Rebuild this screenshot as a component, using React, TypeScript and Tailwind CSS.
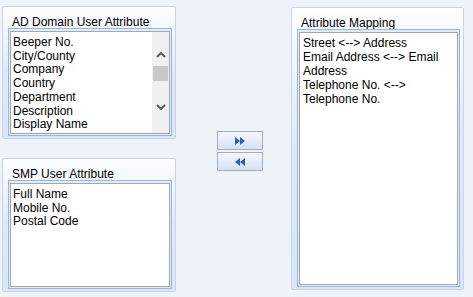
import React from 'react';

const adAttrs = ['Beeper No.', 'City/County', 'Company', 'Country', 'Department', 'Description', 'Display Name'];
const smpAttrs = ['Full Name', 'Mobile No.', 'Postal Code'];
const mappings = ['Street <--> Address', 'Email Address <--> Email Address', 'Telephone No. <--> Telephone No.'];

function Panel({ title, height, children }: { title: string; height: string; children: React.ReactNode }) {
  return (
    <div className={`flex flex-col border border-[#c4d5ec] rounded-[2px] bg-gradient-to-b from-[#fdfeff] via-[#dfe9f7] to-[#dae6f6] pl-[5px] pr-[3px] pb-[2px] ${height}`}>
      <div className="h-[21px] pt-[8px] pl-[4px] leading-[14px] text-[12px] text-black shrink-0">{title}</div>
      <div className="flex-1 flex flex-col border border-[#98b5df] bg-[#e3ecf9] p-[1px] pt-[2px] min-h-0">
        <div className="flex-1 flex border border-[#a6a6a6] bg-white min-h-0 overflow-hidden">{children}</div>
      </div>
    </div>
  );
}

function Chevron({ up }: { up?: boolean }) {
  return (
    <svg width="10" height="7" viewBox="0 0 10 7">
      <path d={up ? 'M1 6 L5 2 L9 6' : 'M1 1 L5 5 L9 1'} fill="none" stroke="#5f5f5f" strokeWidth="2" />
    </svg>
  );
}

function ArrowButton({ dir }: { dir: 'right' | 'left' }) {
  return (
    <button className="w-[46px] h-[19px] flex items-center justify-center border border-[#acacac] bg-gradient-to-b from-[#f4f8fe] to-[#d3e2f5]">
      <svg width="10" height="8" viewBox="0 0 10 8">
        {dir === 'right' ? (
          <path d="M0 0 L5 4 L0 8 Z M5 0 L10 4 L5 8 Z" fill="#2c62ad" />
        ) : (
          <path d="M10 0 L5 4 L10 8 Z M5 0 L0 4 L5 8 Z" fill="#2c62ad" />
        )}
      </svg>
    </button>
  );
}

export default function App() {
  return (
    <div
      className="w-[473px] h-[297px] bg-[#eef3fa] flex items-start pl-[2px] pt-[6px] text-black"
      style={{ fontFamily: '"Liberation Sans", Arial, sans-serif' }}
    >
      <div className="w-[174px] flex flex-col gap-[19px]">
        <Panel title="AD Domain User Attribute" height="h-[133px]">
          <div className="flex-1 pl-[2px] pt-[4px] text-[12px] leading-[13.7px]">
            {adAttrs.map((a) => (
              <div key={a}>{a}</div>
            ))}
          </div>
          <div className="w-[17px] bg-[#f0f0f0] flex flex-col items-center pt-[19px]">
            <Chevron up />
            <div className="mt-[8px] w-[15px] h-[15px] bg-[#c8c8c8]" />
            <div className="mt-[23px]">
              <Chevron />
            </div>
          </div>
        </Panel>
        <Panel title="SMP User Attribute" height="h-[134px]">
          <div className="flex-1 pl-[2px] pt-[4px] text-[12px] leading-[13.5px]">
            {smpAttrs.map((a) => (
              <div key={a}>{a}</div>
            ))}
          </div>
        </Panel>
      </div>

      <div className="ml-[41px] mt-[125px] flex flex-col gap-[2px]">
        <ArrowButton dir="right" />
        <ArrowButton dir="left" />
      </div>

      <div className="ml-[28px] mt-[1px] w-[173px]">
        <Panel title="Attribute Mapping" height="h-[283px]">
          <div className="flex-1 pl-[3px] pr-[2px] pt-[4px] text-[12px] leading-[13.9px]">
            {mappings.map((m) => (
              <div key={m}>{m}</div>
            ))}
          </div>
        </Panel>
      </div>
    </div>
  );
}
